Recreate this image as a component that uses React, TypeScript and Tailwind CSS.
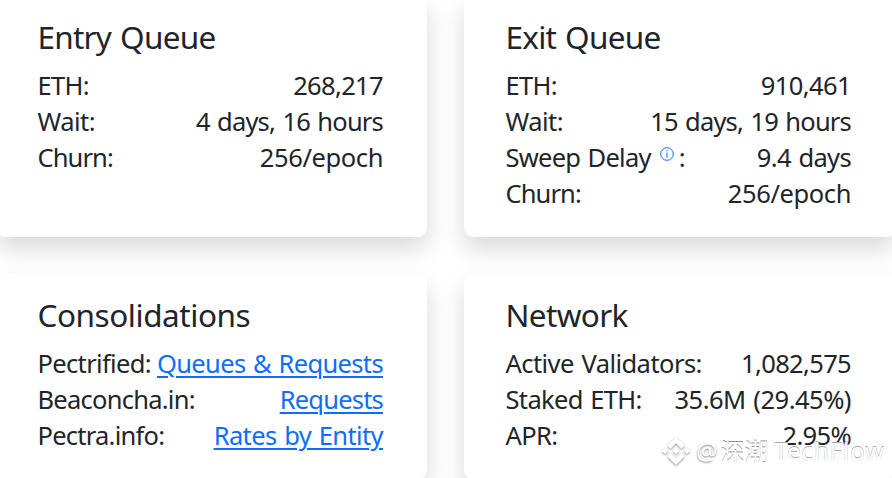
import type { ReactNode } from 'react'
import { SiBinance } from 'react-icons/si'

type RowProps = {
  label: ReactNode
  value: string
  labelClass?: string
  valueClass?: string
  href?: string
}

function Row({ label, value, labelClass = 'tracking-[-0.65px]', valueClass = 'tracking-[-0.65px]', href }: RowProps) {
  return (
    <div className="flex h-9 items-center justify-between whitespace-nowrap text-[25.5px] leading-9 [word-spacing:1.5px]">
      <span className={labelClass}>{label}</span>
      {href ? (
        <a href={href} className={`text-[#0d6efd] underline decoration-2 underline-offset-[3px] ${valueClass}`}>
          {value}
        </a>
      ) : (
        <span className={valueClass}>{value}</span>
      )}
    </div>
  )
}

function Card({ title, titleClass, children }: { title: string; titleClass: string; children: ReactNode }) {
  return (
    <section className="rounded-[9px] bg-white pt-[22px] pr-[43.5px] pb-[26px] pl-[42px] shadow-[0_12px_24px_rgba(0,0,0,0.15)]">
      <h5 className={`mb-[11px] text-[31.5px] leading-[38px] whitespace-nowrap [word-spacing:1.5px] ${titleClass}`}>{title}</h5>
      {children}
    </section>
  )
}

function InfoIcon() {
  return (
    <svg className="mr-[5px] ml-[9px] inline-block -translate-y-1.5 align-baseline" width="14" height="14" viewBox="0 0 14 14" fill="none" stroke="#0d6efd">
      <circle cx="7" cy="7" r="6.3" strokeWidth="1" />
      <path d="M7 5.6V10.8M7 3.2V4.4" strokeWidth="1" />
    </svg>
  )
}

function Watermark() {
  return (
    <div className="absolute top-[433px] left-[662px] flex h-9 items-center whitespace-nowrap text-white">
      <SiBinance className="size-7 drop-shadow-[0_1px_1px_rgba(0,0,0,0.45)]" />
      <span className="ml-[6px] text-2xl leading-none [text-shadow:0_1px_2px_rgba(0,0,0,0.5)]">@</span>
      <span className="ml-[3px] font-['Noto_Sans_CJK_SC',sans-serif] text-2xl [text-shadow:0_-1px_0_#8b9296]">深潮</span>
      <span className="ml-1.5 text-2xl tracking-[0.9px] [text-shadow:0_-1px_0_#a5a9ac,0_0_1px_#b5b8ba]">TechFlow</span>
    </div>
  )
}

export default function App() {
  return (
    <main className="relative h-[478px] w-[892px] overflow-hidden bg-white font-['Noto_Sans','Open_Sans',sans-serif] text-[#212529]">
      <div className="-mt-1 -ml-[4.5px] grid w-[899px] grid-cols-2 gap-[37px]">
        <Card title="Entry Queue" titleClass="tracking-[-0.75px]">
          <Row label="ETH:" value="268,217" />
          <Row label="Wait:" value="4 days, 16 hours" labelClass="tracking-[-0.5px]" valueClass="tracking-[-0.8px]" />
          <Row label="Churn:" value="256/epoch" labelClass="tracking-[-0.9px]" valueClass="tracking-[-0.4px]" />
        </Card>
        <Card title="Exit Queue" titleClass="tracking-[-0.75px]">
          <Row label="ETH:" value="910,461" valueClass="tracking-[-0.6px]" />
          <Row label="Wait:" value="15 days, 19 hours" labelClass="tracking-[-0.5px]" valueClass="tracking-[-0.8px]" />
          <Row label={<>Sweep Delay<InfoIcon />:</>} value="9.4 days" labelClass="tracking-[-0.75px]" />
          <Row label="Churn:" value="256/epoch" labelClass="tracking-[-0.9px]" valueClass="tracking-[-0.4px]" />
        </Card>
        <Card title="Consolidations" titleClass="tracking-[-0.45px]">
          <Row label="Pectrified:" value="Queues & Requests" href="#" />
          <Row label="Beaconcha.in:" value="Requests" href="#" labelClass="tracking-[-0.75px]" valueClass="tracking-[-0.8px]" />
          <Row label="Pectra.info:" value="Rates by Entity" href="#" labelClass="tracking-[-0.75px]" valueClass="tracking-[-0.6px]" />
        </Card>
        <Card title="Network" titleClass="tracking-[-0.65px]">
          <Row label="Active Validators:" value="1,082,575" labelClass="tracking-[-0.55px]" />
          <Row label="Staked ETH:" value="35.6M (29.45%)" valueClass="tracking-[-0.5px]" />
          <Row label="APR:" value="2.95%" />
        </Card>
      </div>
      <Watermark />
    </main>
  )
}
